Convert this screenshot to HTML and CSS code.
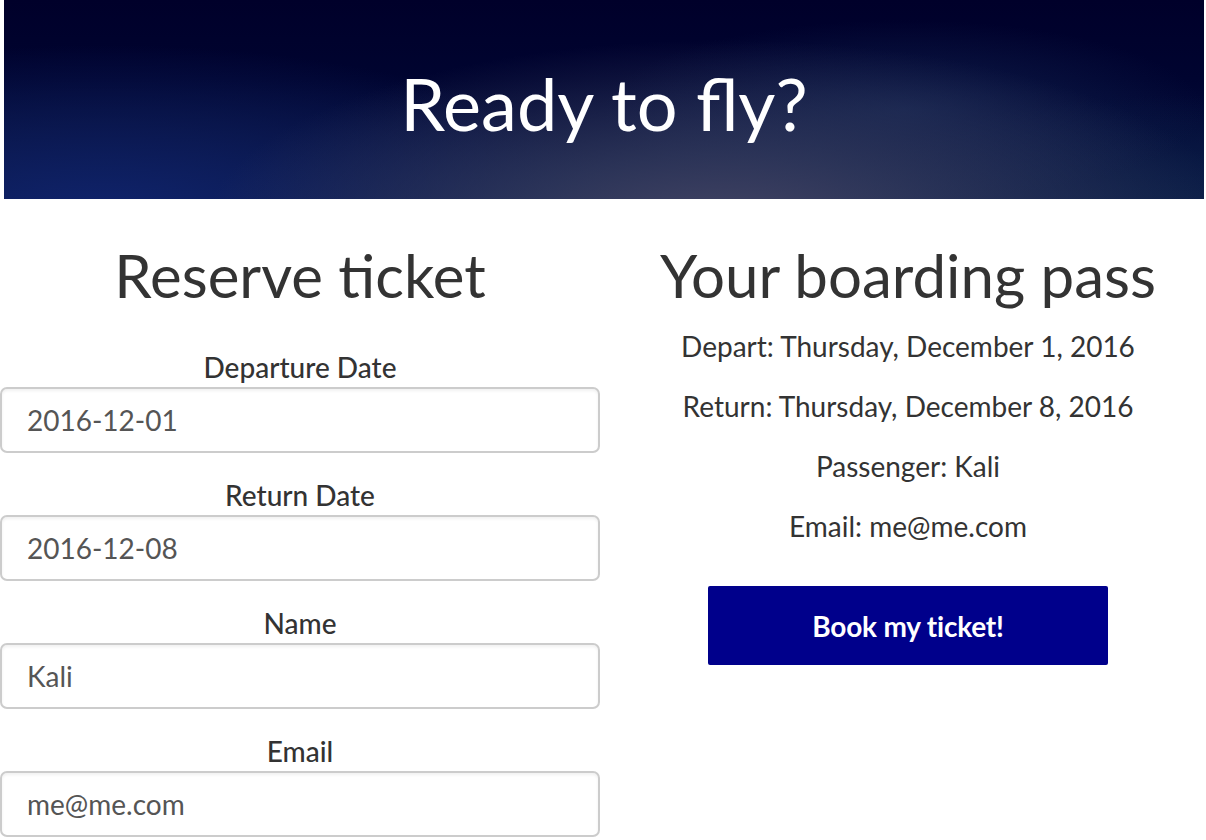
FILE: index.html
```html
<!DOCTYPE html>
<html>
<head>
<meta charset="utf-8">
<link rel="stylesheet" href="styles.css">
</head>
<body>
<header class="hero">
  <h1 class="hero-title">Ready to fly?</h1>
</header>
<main class="content">
  <section class="col form-col">
    <h2 class="col-title">Reserve ticket</h2>
    <form class="form">
      <div class="field">
        <label class="field-label">Departure Date</label>
        <input class="field-input" type="text" value="2016-12-01">
      </div>
      <div class="field">
        <label class="field-label">Return Date</label>
        <input class="field-input" type="text" value="2016-12-08">
      </div>
      <div class="field">
        <label class="field-label">Name</label>
        <input class="field-input" type="text" value="Kali">
      </div>
      <div class="field">
        <label class="field-label">Email</label>
        <input class="field-input" type="text" value="me@me.com">
      </div>
    </form>
  </section>
  <section class="col pass-col">
    <h2 class="col-title">Your boarding pass</h2>
    <p class="pass-line">Depart: Thursday, December 1, 2016</p>
    <p class="pass-line">Return: Thursday, December 8, 2016</p>
    <p class="pass-line">Passenger: Kali</p>
    <p class="pass-line">Email: me@me.com</p>
    <button class="book-btn" type="button">Book my ticket!</button>
  </section>
</main>
</body>
</html>
```
FILE: styles.css
```css
* { box-sizing: border-box; }
html, body {
  margin: 0;
  padding: 0;
  background: #fff;
  font-family: Lato, "Open Sans", "Liberation Sans", sans-serif;
  color: #333;
}
.hero {
  margin: 0 2px 0 4px;
  height: 199px;
  display: flex;
  align-items: center;
  justify-content: center;
  background:
    radial-gradient(ellipse 520px 190px at 720px 230px, rgba(72,72,102,0.95), rgba(55,62,95,0.75) 40%, rgba(25,40,85,0) 100%),
    radial-gradient(ellipse 300px 90px at 900px 110px, rgba(25,45,90,0.6), rgba(20,35,80,0) 100%),
    radial-gradient(ellipse 520px 170px at 100px 215px, rgba(16,36,110,0.95), rgba(14,30,92,0.6) 55%, rgba(10,20,70,0) 100%),
    radial-gradient(ellipse 360px 120px at 1180px 215px, rgba(12,32,72,0.9), rgba(10,20,60,0) 100%),
    linear-gradient(180deg, #00002a 0%, #000430 40%, #081644 100%);
}
.hero-title {
  margin: 0;
  padding-top: 6px;
  color: #fff;
  font-size: 72px;
  font-weight: 400;
  line-height: 1;
}
.content {
  display: grid;
  grid-template-columns: 600px 1fr;
  column-gap: 10px;
  padding-top: 40px;
}
.col {
  display: flex;
  flex-direction: column;
  align-items: center;
}
.col-title {
  margin: 0;
  font-size: 60px;
  font-weight: 400;
  line-height: 72px;
  color: #333;
}
.form {
  width: 100%;
  margin-top: 40px;
  display: flex;
  flex-direction: column;
  gap: 26px;
}
.field {
  display: flex;
  flex-direction: column;
  align-items: center;
  gap: 4px;
}
.field-label {
  font-size: 28px;
  line-height: 32px;
  font-weight: 500;
  color: #333;
}
.field-input {
  width: 100%;
  height: 66px;
  padding: 0 25px;
  border: 2px solid #ccc;
  border-radius: 7px;
  box-shadow: inset 0 2px 3px rgba(0,0,0,0.06);
  font-family: Lato, "Open Sans", sans-serif;
  font-size: 28px;
  color: #555;
  background: #fff;
  outline: none;
}
.pass-line {
  margin: 0;
  font-size: 28px;
  line-height: 30px;
  color: #333;
}
.col-title + .pass-line { margin-top: 20px; }
.pass-line + .pass-line { margin-top: 30px; }
.book-btn {
  margin-top: 45px;
  width: 400px;
  height: 79px;
  border: none;
  border-radius: 2px;
  background: #00008b;
  color: #fff;
  font-family: Lato, "Open Sans", sans-serif;
  font-size: 28px;
  font-weight: 700;
  letter-spacing: -0.2px;
}
```
